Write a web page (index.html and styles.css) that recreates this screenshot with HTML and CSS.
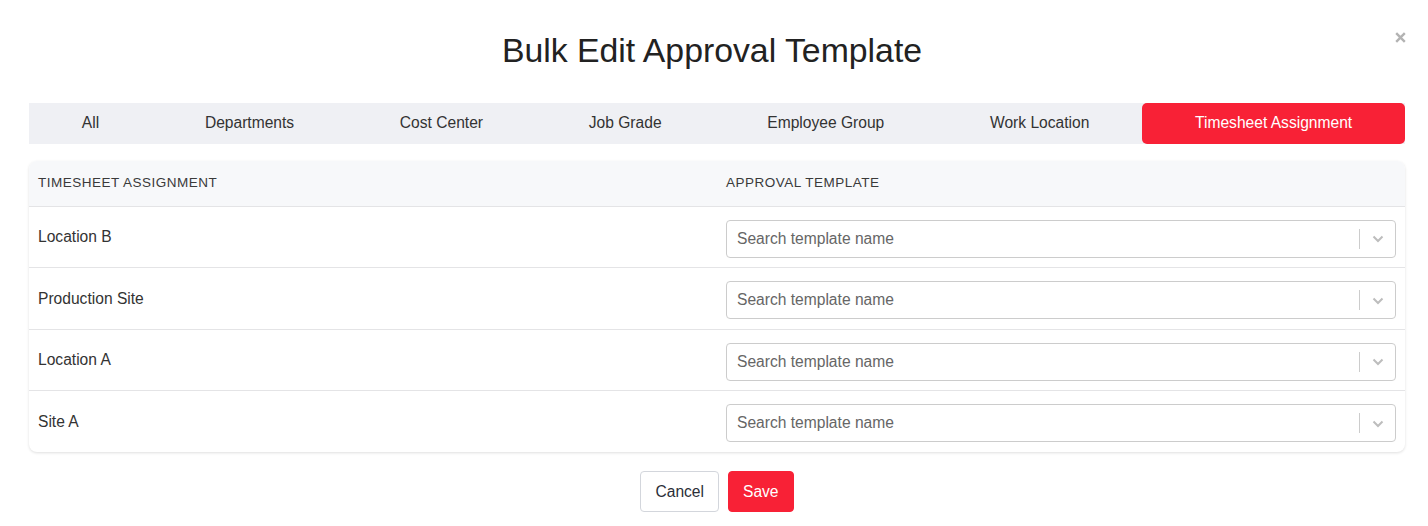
FILE: index.html
```html
<!DOCTYPE html>
<html>
<head>
<meta charset="utf-8">
<link rel="stylesheet" href="styles.css">
</head>
<body>
<div class="modal">
  <button class="close" aria-label="Close"><svg width="11" height="11" viewBox="0 0 11 11"><path d="M1.2 1.2 L9.8 9.8 M9.8 1.2 L1.2 9.8" stroke="#b3b3b3" stroke-width="2.4" fill="none"/></svg></button>
  <h1 class="title">Bulk Edit Approval Template</h1>
  <div class="tabs">
    <div class="tab">All</div>
    <div class="tab">Departments</div>
    <div class="tab">Cost Center</div>
    <div class="tab">Job Grade</div>
    <div class="tab">Employee Group</div>
    <div class="tab">Work Location</div>
    <div class="tab active">Timesheet Assignment</div>
  </div>
  <div class="card">
    <div class="row head">
      <div class="cell">TIMESHEET ASSIGNMENT</div>
      <div class="cell">APPROVAL TEMPLATE</div>
    </div>
    <div class="row r1">
      <div class="cell name">Location B</div>
      <div class="cell sel"><div class="select"><span class="ph">Search template name</span><span class="sep"></span><svg class="chev" width="12" height="8" viewBox="0 0 12 8"><path d="M1.5 1.5 L6 6 L10.5 1.5" fill="none" stroke="#bdbdbd" stroke-width="2"/></svg></div></div>
    </div>
    <div class="row r2">
      <div class="cell name">Production Site</div>
      <div class="cell sel"><div class="select"><span class="ph">Search template name</span><span class="sep"></span><svg class="chev" width="12" height="8" viewBox="0 0 12 8"><path d="M1.5 1.5 L6 6 L10.5 1.5" fill="none" stroke="#bdbdbd" stroke-width="2"/></svg></div></div>
    </div>
    <div class="row r1">
      <div class="cell name">Location A</div>
      <div class="cell sel"><div class="select"><span class="ph">Search template name</span><span class="sep"></span><svg class="chev" width="12" height="8" viewBox="0 0 12 8"><path d="M1.5 1.5 L6 6 L10.5 1.5" fill="none" stroke="#bdbdbd" stroke-width="2"/></svg></div></div>
    </div>
    <div class="row r2 last">
      <div class="cell name">Site A</div>
      <div class="cell sel"><div class="select"><span class="ph">Search template name</span><span class="sep"></span><svg class="chev" width="12" height="8" viewBox="0 0 12 8"><path d="M1.5 1.5 L6 6 L10.5 1.5" fill="none" stroke="#bdbdbd" stroke-width="2"/></svg></div></div>
    </div>
  </div>
  <div class="actions">
    <button class="btn cancel">Cancel</button>
    <button class="btn save">Save</button>
  </div>
</div>
</body>
</html>
```

FILE: styles.css
```css
* { box-sizing: border-box; }
html, body { margin: 0; padding: 0; background: #fff; }
body {
  font-family: "Liberation Sans", Arial, Helvetica, sans-serif;
  color: #333;
  width: 1428px;
  height: 526px;
  overflow: hidden;
}
.modal {
  position: relative;
  padding: 28px 23px 0 29px;
}
.close {
  position: absolute;
  top: 32px;
  right: 22px;
  border: 0;
  background: none;
  padding: 0;
  line-height: 0;
  cursor: pointer;
}
.title {
  margin: 0;
  text-align: center;
  font-size: 33.8px;
  font-weight: normal;
  color: #222;
  line-height: 44px;
  padding-right: 10px;
}
.tabs {
  margin-top: 31px;
  display: flex;
  background: #eff0f4;
  height: 41px;
}
.tab {
  flex: 1 1 auto;
  text-align: center;
  font-size: 15.6px;
  line-height: 40px;
  color: #333;
  white-space: nowrap;
}
.tab.active {
  background: #f82136;
  color: #fff;
  border-radius: 5px;
}
.card {
  margin-top: 17px;
  border-radius: 8px;
  background: #fff;
  box-shadow: 0 1px 3px rgba(0,0,0,0.13);
  overflow: hidden;
}
.row {
  display: grid;
  grid-template-columns: 1fr 1fr;
  border-bottom: 1px solid #e4e4e6;
}
.row.r1 { height: 61px; }
.row.r2 { height: 62px; }
.row.last { border-bottom: 0; height: 61px; }
.row.head {
  background: #f7f8fa;
  height: 46px;
}
.row.head .cell {
  font-size: 13.5px;
  letter-spacing: 0.5px;
  color: #3a3a3a;
  line-height: 43px;
}
.cell {
  padding: 0 9px;
}
.cell.name {
  font-size: 15.6px;
  color: #333;
  display: flex;
  align-items: center;
}
.cell.sel {
  display: flex;
  align-items: center;
}
.select {
  flex: 1;
  height: 38px;
  margin-top: 3px;
  border: 1px solid #cccccc;
  border-radius: 4px;
  display: flex;
  align-items: center;
  padding-left: 10px;
}
.ph {
  flex: 1;
  font-size: 15.6px;
  color: #666;
}
.sep {
  width: 1px;
  height: 20px;
  background: #cccccc;
}
.chev {
  margin: 1px 11px 0 12px;
}
.actions {
  display: flex;
  justify-content: center;
  gap: 9px;
  margin-top: 19px;
  padding-left: 0;
}
.btn {
  height: 41px;
  font-family: "Liberation Sans", Arial, sans-serif;
  font-size: 15.6px;
  border-radius: 4px;
  padding: 0 14px;
  cursor: pointer;
}
.cancel {
  background: #fff;
  border: 1px solid #d3d6dc;
  color: #2b2f38;
}
.save {
  background: #f82136;
  border: 1px solid #f82136;
  color: #fff;
}
```
